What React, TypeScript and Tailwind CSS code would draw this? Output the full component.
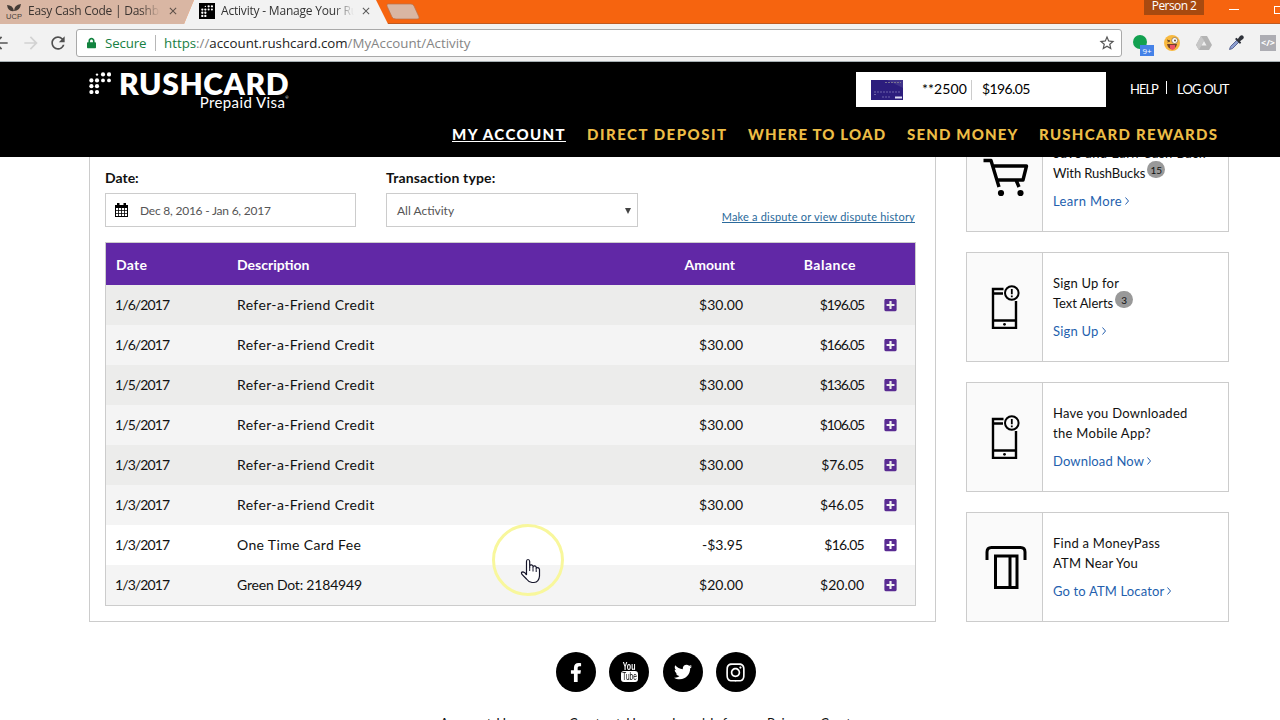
import React from 'react'
import { FaFacebookF, FaInstagram, FaLock, FaPlusSquare, FaTwitter } from 'react-icons/fa'
import { MdArrowBack, MdArrowForward, MdRefresh, MdStarBorder, MdClose } from 'react-icons/md'

const rows = [
  { date: '1/6/2017', description: 'Refer-a-Friend Credit', amount: '$30.00', balance: '$196.05', bg: 'bg-[#ececeb]', fit: 'tracking-[-1.1px]' },
  { date: '1/6/2017', description: 'Refer-a-Friend Credit', amount: '$30.00', balance: '$166.05', bg: 'bg-[#f4f4f4]', fit: 'tracking-[-1.1px]' },
  { date: '1/5/2017', description: 'Refer-a-Friend Credit', amount: '$30.00', balance: '$136.05', bg: 'bg-[#ececeb]', fit: 'tracking-[-1.1px]' },
  { date: '1/5/2017', description: 'Refer-a-Friend Credit', amount: '$30.00', balance: '$106.05', bg: 'bg-[#f4f4f4]', fit: 'tracking-[-1.1px]' },
  { date: '1/3/2017', description: 'Refer-a-Friend Credit', amount: '$30.00', balance: '$76.05', bg: 'bg-[#ececeb]', fit: 'tracking-[-0.2px]' },
  { date: '1/3/2017', description: 'Refer-a-Friend Credit', amount: '$30.00', balance: '$46.05', bg: 'bg-[#f4f4f4]', fit: '' },
  { date: '1/3/2017', description: 'One Time Card Fee', amount: '-$3.95', balance: '$16.05', bg: 'bg-white', fit: 'tracking-[-0.7px]' },
  { date: '1/3/2017', description: 'Green Dot: 2184949', amount: '$20.00', balance: '$20.00', bg: 'bg-[#f4f4f4]', fit: '' },
]

const Dots = ({ className }: { className: string }) => (
  <svg viewBox="0 0 22 22" className={className} fill="white">
    <circle cx="8" cy="2.6" r="1.2" />
    <circle cx="14" cy="2.4" r="2.1" />
    <circle cx="20" cy="2.4" r="2.1" />
    <circle cx="2.4" cy="8.4" r="2.1" />
    <circle cx="8" cy="8.4" r="2.1" />
    <circle cx="14" cy="8.4" r="1.9" />
    <circle cx="20" cy="8.4" r="1.9" />
    <circle cx="2.4" cy="14.2" r="2.1" />
    <circle cx="8" cy="14.2" r="2.1" />
    <circle cx="2.4" cy="20" r="2.1" />
    <circle cx="8" cy="20" r="2.1" />
  </svg>
)

const CalendarIcon = () => (
  <svg viewBox="0 0 13 14" className="w-[13px] h-[14px]">
    <path d="M0 2H13V14H0Z" fill="black" />
    <path d="M2 0H4.500V3H2ZM8.500 0H11V3H8.500Z" fill="black" />
    <path d="M1 5H3.200V7.200H1ZM4 5H6.200V7.200H4ZM7 5H9.200V7.200H7ZM10 5H12V7.200H10ZM1 8H3.200V10.200H1ZM4 8H6.200V10.200H4ZM7 8H9.200V10.200H7ZM10 8H12V10.200H10ZM1 11H3.200V13H1ZM4 11H6.200V13H4ZM7 11H9.200V13H7ZM10 11H12V13H10Z" fill="white" />
  </svg>
)

const CartIcon = () => (
  <svg viewBox="0 0 46 40" className="ml-0.5 w-[46px] h-10" fill="none" stroke="black" strokeWidth="3.4">
    <path d="M0.5 3.5H8L16 30M10 9H43.5L40 23H13.5M33 23L36 30" strokeLinejoin="round" />
    <circle cx="18" cy="36" r="3.1" fill="black" stroke="none" />
    <circle cx="37.5" cy="36" r="3.1" fill="black" stroke="none" />
  </svg>
)

const PhoneIcon = () => (
  <svg viewBox="0 0 30 44" className="ml-[3px] w-[30px] h-11" fill="none" stroke="black" strokeWidth="2">
    <path d="M12.5 4H2V43H25V16M2 8.5H12M2 35.5H25" strokeWidth="2.4" />
    <circle cx="20.8" cy="8" r="6.8" />
    <path d="M20.8 4V9.2M20.8 10.4V12.2" strokeWidth="1.8" />
    <circle cx="13.5" cy="39.3" r="1.4" fill="black" stroke="none" />
  </svg>
)

const AtmIcon = () => (
  <svg viewBox="0 0 42 44" className="ml-[3px] w-[42px] h-11" fill="none" stroke="black" strokeWidth="3">
    <path d="M2 15V7Q2 2.5 6.5 2.5H35.5Q40 2.5 40 7V15" />
    <path d="M10.5 11H32V42.5H10.5ZM25 11V42.5" />
  </svg>
)

const cards = [
  { icon: <CartIcon />, first: 'Save and Earn Cash Back', second: 'With RushBucks', badge: '15', link: 'Learn More', fit: 'tracking-[0.45px]', secondFit: 'tracking-[-0.1px]', linkFit: 'tracking-[0.35px]' },
  { icon: <PhoneIcon />, first: 'Sign Up for', second: 'Text Alerts', badge: '3', link: 'Sign Up', fit: 'tracking-[0.2px]', secondFit: 'tracking-[-0.05px]', linkFit: 'tracking-[0.2px]' },
  { icon: <PhoneIcon />, first: 'Have you Downloaded', second: 'the Mobile App?', badge: '', link: 'Download Now', fit: 'tracking-[0.25px]', secondFit: 'tracking-[0.3px]', linkFit: 'tracking-[0.15px]' },
  { icon: <AtmIcon />, first: 'Find a MoneyPass', second: 'ATM Near You', badge: '', link: 'Go to ATM Locator', fit: 'tracking-[0.25px]', secondFit: 'tracking-[0.2px]', linkFit: 'tracking-[0.15px]' },
]

const BrowserBar = () => (
  <div className="font-['Open_Sans',sans-serif]">
    {/* Tabs */}
    <div className="relative flex h-6 bg-[#f6640f] border-b border-[#c05a20]">
      <svg viewBox="0 0 430 24" className="absolute left-0 top-0 w-[430px] h-6">
        <path d="M0 0H194L184 24H0Z" fill="#d9b6a3" />
        <path d="M184 24L194 0H376L388 24Z" fill="#f2f2f2" />
        <path d="M388 4H411Q413 4 414 6L419 17Q419.500 19 417 19H396Q393 19 392 17L387 6Q386.500 4 388 4Z" fill="#d9b6a3" stroke="#b8704a" strokeWidth="0.7" />
      </svg>
      <div className="relative flex w-[190px] items-center pb-px">
        <svg viewBox="0 0 16 16" className="ml-1.5 w-4 h-4 shrink-0" fill="#463c36">
          <path d="M1 2Q7 2 8 8Q2 9 1 2ZM8 8Q8 2 15 1Q14 8 8 8Z" />
          <text x="0" y="15.500" fontSize="7.500" fontFamily="Liberation Sans" textLength="16">UCP</text>
        </svg>
        <span className="ml-1.5 w-[132px] overflow-hidden whitespace-nowrap text-[12px] tracking-[-0.24px] text-[#3b3430] [mask-image:linear-gradient(to_right,black_85%,transparent)]">Easy Cash Code | Dashboard</span>
        <MdClose className="ml-[7px] shrink-0 w-3 h-3 text-[#5d4f48]" />
      </div>
      <div className="relative flex w-[190px] items-center pb-px pl-2">
        <div className="flex w-4 h-4 shrink-0 items-center justify-center bg-black ml-px">
          <Dots className="w-3 h-3" />
        </div>
        <span className="ml-1.5 w-[133px] overflow-hidden whitespace-nowrap text-[12px] tracking-[-0.2px] text-[#333] [mask-image:linear-gradient(to_right,black_85%,transparent)]">Activity - Manage Your RushCard</span>
        <MdClose className="ml-1.5 shrink-0 w-3 h-3 text-[#5a5a5a]" />
      </div>
      <div className="relative flex ml-auto">
        <div className="h-[15px] w-[60px] bg-[#a84a10] text-center text-[12px] leading-[11px] tracking-[-0.6px] text-white">Person 2</div>
        <div className="ml-[25px] mt-[9px] h-px w-2.5 bg-white" />
        <div className="ml-[35px] mt-1.5 h-2 w-1.5 border border-r-0 border-white" />
      </div>
    </div>

    {/* Toolbar */}
    <div className="flex h-[38px] items-center border-b border-[#a7b0b4] bg-[#f2f2f2]">
      <MdArrowBack className="-ml-[9px] w-5 h-5 text-[#555]" />
      <MdArrowForward className="ml-2.5 w-5 h-5 text-[#d2d2d2]" />
      <MdRefresh className="ml-[7px] w-5 h-5 text-[#505050]" />
      <div className="ml-2 flex h-7 w-[1046px] items-center rounded-[3px] border border-[#a9a9a9] bg-white pl-2.5 text-[13.3px]">
        <FaLock className="w-[9px] h-3 text-[#12833f]" />
        <span className="ml-[9px] mt-0.5 w-[50px] tracking-[-0.15px] text-[#178043]">Secure</span>
        <span className="h-4 w-px bg-[#b7b7b7]" />
        <span className="ml-2 mt-0.5 whitespace-nowrap text-[#858585]"><span className="text-[#178043]">https</span>://<span className="text-[#222]">account.rushcard.com</span>/MyAccount/Activity</span>
        <MdStarBorder className="ml-auto mr-[5px] w-[18px] h-[18px] text-[#555]" />
      </div>
      <div className="relative ml-2.5 w-5 h-5">
        <div className="absolute left-px top-0.5 w-[14px] h-[14px] rounded-full bg-[#12a150]" />
        <div className="absolute left-2 top-3 w-[14px] h-[11px] bg-[#4582e8] text-center text-[8px] leading-[11px] text-white">9+</div>
      </div>
      <svg viewBox="0 0 16 16" className="ml-3 w-4 h-4 shrink-0">
        <circle cx="8" cy="8" r="8" fill="#f8b93f" />
        <circle cx="10.700" cy="5.500" r="3" fill="#fff" stroke="#78634b" strokeWidth="0.700" />
        <circle cx="11" cy="5.500" r="0.900" fill="#4b3420" />
        <path d="M3 5L6 6L3.500 7" fill="none" stroke="#65482a" strokeWidth="1" />
        <path d="M3 9H13Q12 14 8 14T3 9Z" fill="#76422b" />
        <path d="M6 10H11V13Q8.500 17 6 13Z" fill="#ee5365" />
      </svg>
      <svg viewBox="0 0 16 14" className="ml-4 w-4 h-[14px] shrink-0">
        <path d="M5 0H11L16 9L13 14H3L0 9Z" fill="#b4b4b4" />
        <path d="M5 0L8 4.500L3 14L0 9Z" fill="#c7c7c7" />
        <path d="M8 5L10.500 9.500H5.500Z" fill="#eee" />
      </svg>
      {/* eyedropper */}
      <svg viewBox="0 0 16 16" className="ml-4 w-4 h-4 shrink-0">
        <path d="M1.500 14.500L2.500 11.500L9 5L11 7L4.500 13.500Z" fill="#8d9fd0" stroke="#5a6694" />
        <path d="M7 4L8.500 2.800L9.800 4L12 1Q14 -0.500 15.200 1Q16.500 2.500 15 4L12 6.300L13.200 7.500L12 9Z" fill="#30333b" />
      </svg>
      <div className="ml-4 flex w-4 h-4 shrink-0 items-center justify-center bg-[#adadb3] text-[9px] font-bold text-white">&lt;/&gt;</div>
    </div>
  </div>
)

const Header = () => (
  <header className="h-[95px] bg-black text-white overflow-hidden">
    <div className="flex h-[52px]">
      <div className="ml-[89px] mt-[10px] w-[201px]">
        <div className="flex h-[23px]">
          <Dots className="w-[22px] h-[22px]" />
          <span className="ml-2 -mt-px text-[30px] leading-[24px] font-extrabold tracking-[0.6px]">RUSHCARD</span>
        </div>
        <div className="flex justify-end pr-px text-[15px] leading-[15px] tracking-[0.4px]">
          Prepaid Visa<span className="text-[4px] leading-[6px]">®</span>
        </div>
      </div>
      <div className="ml-[566px] mt-[10px] flex h-[35px] w-[250px] shrink-0 items-center bg-white text-[14px] text-black">
        <svg viewBox="0 0 32 20" className="ml-[15px] w-8 h-5">
          <rect width="32" height="20" fill="#2c1d7d" />
          <path d="M16 0L32 8V0Z" fill="#40338a" />
          <path d="M14 2.500H30" stroke="#77718f" strokeDasharray="2 1" />
          <path d="M3 12H29M3 14.500H6M11 17H20" stroke="#8c84bf" strokeDasharray="2 1" strokeWidth="0.7" />
          <path d="M24 17.500H31" stroke="#dedcf3" strokeWidth="2" />
        </svg>
        <span className="ml-[19px] mb-0.5 w-[49px] tracking-[0.1px]">**2500</span>
        <span className="h-5 w-px bg-[#ccc]" />
        <span className="ml-2.5 mb-0.5 tracking-[-0.6px]">$196.05</span>
      </div>
      <div className="ml-6 mt-[10px] flex h-[35px] items-center text-[13px] whitespace-nowrap">
        <span className="w-9 tracking-[-1px]">HELP</span>
        <span className="mb-1 h-[13px] w-px bg-white" />
        <span className="ml-2.5 tracking-[-0.8px]">LOG OUT</span>
      </div>
    </div>
    <nav className="ml-[452px] mt-3 flex whitespace-nowrap text-[15px] leading-4 font-black tracking-[1.4px] text-[#edbd46]">
      <span className="w-[135px]"><span className="inline-block h-4 border-b border-white text-white">MY ACCOUNT</span></span>
      <span className="w-[161px] tracking-[1.5px]">DIRECT DEPOSIT</span>
      <span className="w-[159px] tracking-[1.15px]">WHERE TO LOAD</span>
      <span className="w-[132px] tracking-[1.15px]">SEND MONEY</span>
      <span className="tracking-[1.25px]">RUSHCARD REWARDS</span>
    </nav>
  </header>
)

const Activity = () => (
  <section className="h-[465px] w-[847px] border border-t-0 border-[#ccc] px-[15px] pt-3">
    <div className="flex">
      <div className="w-[281px]">
        <div className="text-[14px] leading-[17px] font-bold text-[#111]">Date:</div>
        <div className="mt-[7px] flex h-[34px] w-[251px] items-center border border-[#ccc] pl-[9px] text-[12px] text-[#555]">
          <CalendarIcon />
          <span className="ml-3 mt-px tracking-[-0.22px]">Dec 8, 2016 - Jan 6, 2017</span>
        </div>
      </div>
      <div>
        <div className="text-[14px] leading-[17px] font-bold tracking-[0.15px] text-[#111]">Transaction type:</div>
        <div className="mt-[7px] flex h-[34px] w-[252px] items-center justify-between border border-[#ccc] pt-px pl-2.5 pr-1.5 text-[12px] text-[#555]">
          All Activity
          <svg viewBox="0 0 6 6" className="w-1.5 h-1.5"><path d="M0 0H6L3 6Z" fill="#444" /></svg>
        </div>
      </div>
      <a className="ml-auto mt-[41px] h-[13px] mr-[5px] border-b border-[#2b6a9b] text-[11px] leading-[14px] tracking-[0.2px] whitespace-nowrap text-[#2b6a9b]">Make a dispute or view dispute history</a>
    </div>

    <div className="mt-[15px] w-[811px] border border-[#ccc] text-[14px] text-[#111]">
      <div className="flex h-[42px] items-center bg-[#6128a6] font-bold text-white">
        <span className="w-[131px] pl-2.5 tracking-[0.3px]">Date</span>
        <span className="w-[398px]">Description</span>
        <span className="w-[100px] text-right">Amount</span>
        <span className="w-[121px] text-right tracking-[0.5px]">Balance</span>
      </div>
      {rows.map((row, i) => (
        <div key={i} className={`flex h-10 items-center ${row.bg}`}>
          <span className="mb-0.5 w-[131px] pl-[9px] tracking-[-0.9px]">{row.date}</span>
          <span className={`mb-0.5 w-[399px] ${row.description.startsWith('Green') ? 'tracking-[-0.2px]' : 'tracking-[0.36px]'}`}>{row.description}</span>
          <span className="mb-0.5 w-[107px] text-right">{row.amount}</span>
          <span className={`mb-0.5 w-[121px] text-right ${row.fit}`}>{row.balance}</span>
          <FaPlusSquare className="ml-5 w-[13px] h-[14px] text-[#592b92]" />
        </div>
      ))}
    </div>
  </section>
)

const Sidebar = () => (
  <aside className="-mt-[35px] ml-[30px] flex w-[263px] flex-col gap-5">
    {cards.map((card) => (
      <article key={card.first} className="flex h-[110px] border border-[#ccc] bg-white text-[13px] leading-5 text-[#111]">
        <div className="flex w-[76px] items-center justify-center border-r border-[#ccc] bg-[#fafafa]">{card.icon}</div>
        <div className="pl-2.5 pt-5 whitespace-nowrap">
          <div className={card.fit}>{card.first}</div>
          <div className={`flex ${card.secondFit}`}>
            {card.second}
            {card.badge && <span className="-mt-0.5 ml-0.5 flex w-[18px] h-[17px] items-center justify-center rounded-full bg-[#999] text-[10px] tracking-normal">{card.badge}</span>}
          </div>
          <a className={`mt-2 flex items-center text-[#245fae] ${card.linkFit}`}>
            {card.link}
            <svg viewBox="0 0 4 8" className="ml-[3px] w-1 h-2" fill="none" stroke="currentColor"><path d="M0.500 0.500L3.500 4L0.500 7.500" /></svg>
          </a>
        </div>
      </article>
    ))}
  </aside>
)

const Footer = () => (
  <footer>
    <div className="ml-[556px] mt-[30px] flex gap-[13.3px] text-white">
      <span className="flex w-10 h-10 items-center justify-center rounded-full bg-black"><FaFacebookF className="w-5 h-[19px]" /></span>
      <span className="flex w-10 h-10 flex-col items-center justify-center rounded-full bg-black font-['Liberation_Sans']">
        <span className="h-[9px] scale-x-[0.7] text-[10px] leading-[9px] font-bold">You</span>
        <span className="h-[11px] w-[17px] rounded-[3px] bg-white text-center text-[10px] leading-[11px] text-black"><span className="-ml-1 inline-block w-[25px] scale-x-[0.65]">Tube</span></span>
      </span>
      <span className="flex w-10 h-10 items-center justify-center rounded-full bg-black"><FaTwitter className="w-[18px] h-[18px]" /></span>
      <span className="flex w-10 h-10 items-center justify-center rounded-full bg-black"><FaInstagram className="w-[21px] h-[21px]" /></span>
    </div>
    <div className="ml-[440px] mt-[22px] flex whitespace-nowrap text-[13px] leading-[18px] text-[#111]">
      <span className="w-[129px] tracking-[0.7px]">Account Home</span>
      <span className="w-[103px] tracking-[1.1px]">Contact Us</span>
      <span className="w-[95px] tracking-[0.9px]">Legal Info</span>
      <span className="tracking-[1.1px]">Privacy Center</span>
    </div>
  </footer>
)

// Highlighted mouse pointer floating above the table
const Pointer = () => (
  <svg viewBox="0 0 74 76" className="pointer-events-none absolute left-[491px] top-[522px] z-20 w-[74px] h-[76px]" fill="none">
    <circle cx="37" cy="38" r="34.500" stroke="#f8f79c" strokeWidth="3" />
    <path
      d="M35.500 53V39.500Q35.500 37.500 37 37.500T38.700 39.500V46V43.500Q40.700 42 42 44V46.500V44.500Q44 43 45.200 45V47.500V46Q48 45 48.500 47.500V54Q48 60 43 60.500H41Q37.500 60 35.500 57L31 52.500Q29.500 50 32 49.800Q34 50 35.500 53Z"
      fill="white"
      stroke="#15152a"
      strokeWidth="1.2"
    />
    <path d="M38.700 46V49M42 46.500V49.500M45.200 47.500V50" stroke="#15152a" />
  </svg>
)

const App = () => {
  return (
    <div className="relative h-[720px] w-[1280px] overflow-hidden bg-white font-['Lato',sans-serif]">
      <BrowserBar />
      <div className="relative z-10">
        <Header />
      </div>
      <main className="flex pl-[89px]">
        <Activity />
        <Sidebar />
      </main>
      <Footer />
      <Pointer />
    </div>
  )
}

export default App
